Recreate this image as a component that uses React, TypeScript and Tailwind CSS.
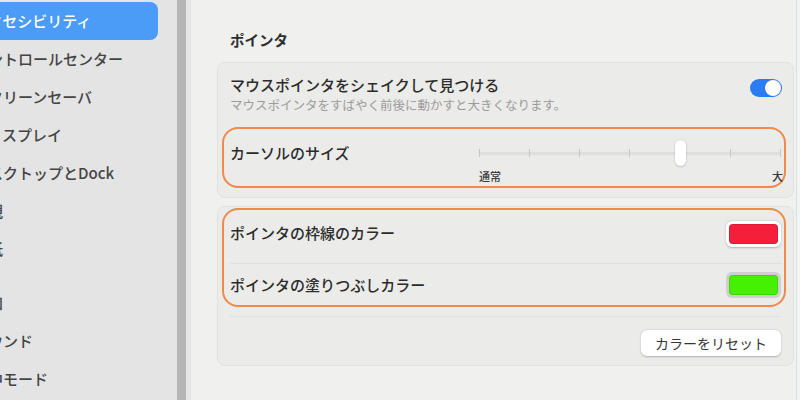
import React from 'react';

const font = { fontFamily: '"Noto Sans CJK JP", "Noto Sans", sans-serif' };

// サイドバー項目（左端は見切れている）
const groupA = [
  'アクセシビリティ',
  'コントロールセンター',
  'スクリーンセーバ',
  'ディスプレイ',
  'デスクトップとDock',
  '外観',
  '壁紙',
];
const groupB = ['通知', 'サウンド', '集中モード'];

function SidebarItem({ label, active }: { label: string; active?: boolean }) {
  return (
    <div
      className={
        'h-[38px] mr-[19px] flex items-center whitespace-nowrap overflow-hidden rounded-r-[8px] ' +
        (active ? 'bg-[#4a9cf7] text-white' : 'text-[#444444]')
      }
    >
      <span className="-ml-[27px] text-[15px] font-medium">{label}</span>
    </div>
  );
}

function Toggle() {
  return (
    <div className="mt-[4px] w-[32px] h-[18px] rounded-full bg-[#2b7bf3] flex items-center justify-end pr-[1px]">
      <div className="w-[16px] h-[16px] rounded-full bg-white shadow-[0_0_1px_rgba(0,0,0,0.3)]" />
    </div>
  );
}

function Slider() {
  const ticks = [0, 1, 2, 3, 4, 5, 6];
  return (
    <div className="w-[302px] mr-[3px] flex flex-col">
      <div className="relative h-[26px] flex items-center">
        <div className="w-full h-[3px] bg-[#dedede] rounded-full" />
        <div className="absolute inset-x-0 top-0 h-full flex items-center justify-between">
          {ticks.map((t) =>
            t === 4 ? (
              <div
                key={t}
                className="w-[11px] h-[26px] -mx-[5px] rounded-full bg-white shadow-[0_0.5px_2px_rgba(0,0,0,0.3)]"
              />
            ) : (
              <div key={t} className="w-[1px] h-[8px] bg-[#c6c6c6]" />
            )
          )}
        </div>
      </div>
      <div className="flex justify-between mt-[3px] text-[11px] font-medium text-[#3a3a3a] leading-[14px]">
        <span>通常</span>
        <span className="-mr-[2px]">大</span>
      </div>
    </div>
  );
}

function ColorWell({ color, selected }: { color: string; selected?: boolean }) {
  return (
    <div
      className={
        'w-[55px] h-[26px] rounded-[6px] p-[3px] mr-[3px] ' +
        (selected ? 'bg-[#cfcfcf]' : 'bg-white shadow-[0_0.5px_2px_rgba(0,0,0,0.25)]')
      }
    >
      <div
        className="w-full h-full rounded-[4px] border border-black/10"
        style={{ backgroundColor: color }}
      />
    </div>
  );
}

export default function App() {
  return (
    <div className="w-[800px] h-[400px] flex overflow-hidden bg-[#f0f0ef]" style={font}>
      {/* Sidebar */}
      <div className="w-[177px] shrink-0 bg-[#e4e4e4] pt-[2px] overflow-hidden">
        {groupA.map((l, i) => (
          <SidebarItem key={l} label={l} active={i === 0} />
        ))}
        <div className="h-[16px]" />
        {groupB.map((l) => (
          <SidebarItem key={l} label={l} />
        ))}
      </div>
      <div className="w-[9px] shrink-0 bg-[#b5b5b5]" />
      <div className="w-[5px] shrink-0 bg-[#e6e6e6]" />

      {/* Main */}
      <div className="flex-1 pl-[26px] pr-[2px] pt-[29px] border-r border-[#d2e6df]">
        <div className="pl-[13px] text-[14.5px] font-bold text-[#2e2e2e] leading-[22px]">ポインタ</div>

        {/* Card 1 */}
        <div className="mt-[11px] rounded-[8px] border border-[#e1e1e0] bg-[#ebebea] pb-[9px]">
          <div className="flex items-start justify-between pl-[12px] pr-[11px] pt-[12px]">
            <div>
              <div className="text-[15px] font-medium text-[#2b2b2b] leading-[20px]">
                マウスポインタをシェイクして見つける
              </div>
              <div className="text-[12.5px] text-[#9b9b9b] leading-[19px]">
                マウスポインタをすばやく前後に動かすと大きくなります。
              </div>
            </div>
            <Toggle />
          </div>
          <div className="mt-[13px] ml-[4px] mr-[7px] h-[61px] rounded-[16px] border-2 border-[#f0894a] flex items-start justify-between pl-[6px] pt-[11px]">
            <div className="text-[15px] font-medium text-[#2b2b2b] leading-[26px]">カーソルのサイズ</div>
            <Slider />
          </div>
        </div>

        {/* Card 2 */}
        <div className="mt-[8px] rounded-[8px] border border-[#e1e1e0] bg-[#ebebea] pt-[1px] pb-[9px]">
          <div className="ml-[4px] mr-[7px] rounded-[16px] border-2 border-[#f0894a] pl-[6px]">
            <div className="h-[53px] pb-[6px] flex items-center justify-between">
              <span className="text-[15px] font-medium text-[#2b2b2b]">ポインタの枠線のカラー</span>
              <ColorWell color="#f51f3c" />
            </div>
            <div className="h-[1px] bg-[#e0e0df] mr-[2px]" />
            <div className="h-[41px] pt-[1px] flex items-center justify-between">
              <span className="text-[15px] font-medium text-[#2b2b2b]">ポインタの塗りつぶしカラー</span>
              <ColorWell color="#45f000" selected />
            </div>
          </div>
          <div className="mt-[9px] mx-[12px] h-[1px] bg-[#e0e0df]" />
          <div className="mt-[13px] flex justify-end pr-[12px]">
            <button className="h-[26px] px-[14px] rounded-[6px] bg-white text-[14px] text-[#333] shadow-[0_0.5px_2px_rgba(0,0,0,0.25)]">
              カラーをリセット
            </button>
          </div>
        </div>
      </div>
      <div className="w-[3px] shrink-0 bg-[#f3f3f3]" />
    </div>
  );
}
